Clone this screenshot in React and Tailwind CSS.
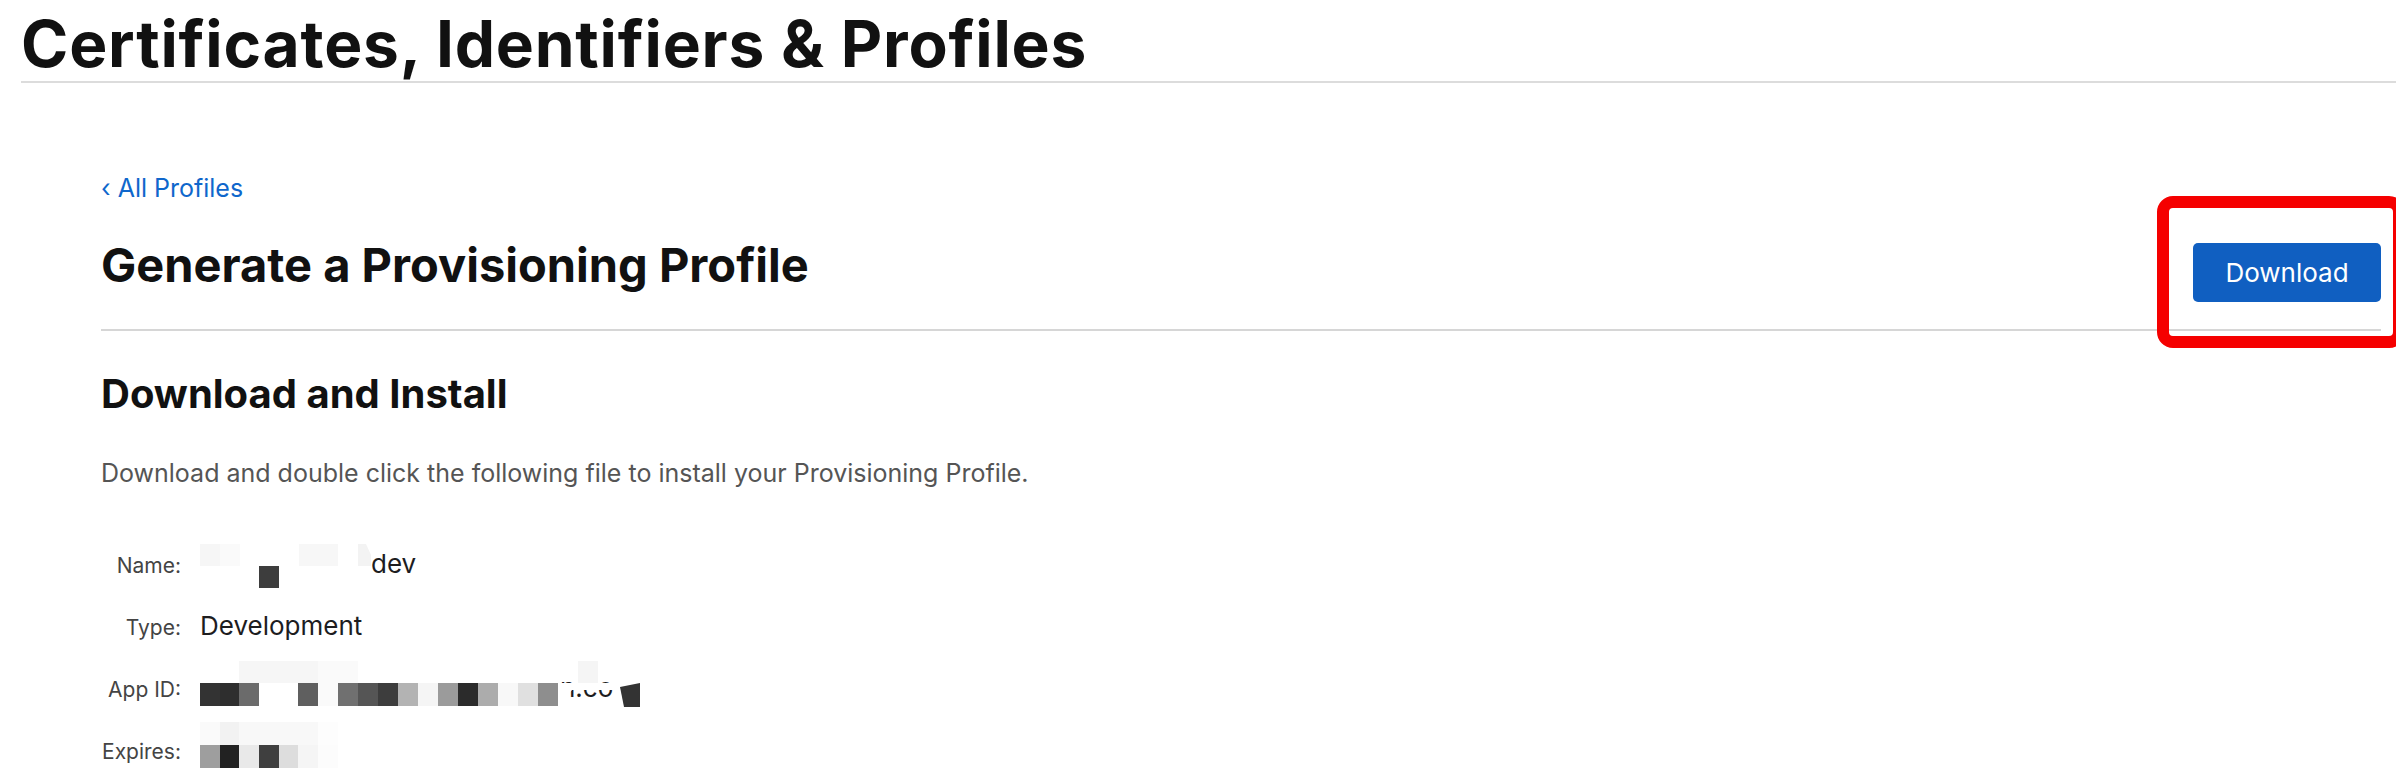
const nameBlocks = [
  [0, 11, 20, 22, "#f6f6f6"],
  [20, 11, 20, 22, "#fafafa"],
  [99, 11, 39, 22, "#f7f7f7"],
  [59, 33, 20, 22, "#3d3d3d"],
];

const appIdBlocks = [
  [39, 4, 79, 22, "#f6f6f6"],
  [118, 4, 40, 22, "#fafafa"],
  [378, 4, 20, 22, "#f5f5f5"],
  [0, 26, 20, 23, "#333333"],
  [20, 26, 19, 23, "#2e2e2e"],
  [39, 26, 20, 23, "#6b6b6b"],
  [98, 26, 20, 23, "#5f5f5f"],
  [118, 26, 20, 23, "#fafafa"],
  [138, 26, 20, 23, "#707070"],
  [158, 26, 20, 23, "#555555"],
  [178, 26, 20, 23, "#3d3d3d"],
  [198, 26, 20, 23, "#b3b3b3"],
  [218, 26, 20, 23, "#f5f5f5"],
  [238, 26, 20, 23, "#9b9b9b"],
  [258, 26, 20, 23, "#2b2b2b"],
  [278, 26, 20, 23, "#acacac"],
  [298, 26, 20, 23, "#f8f8f8"],
  [318, 26, 20, 23, "#e0e0e0"],
  [338, 26, 20, 23, "#8e8e8e"],
];

const expiresBlocks = [
  [0, 3, 20, 23, "#fafafa"],
  [20, 3, 19, 23, "#f2f2f2"],
  [39, 3, 79, 23, "#f8f8f8"],
  [118, 3, 20, 23, "#fdfdfd"],
  [0, 26, 20, 23, "#9e9e9e"],
  [20, 26, 19, 23, "#222222"],
  [39, 26, 20, 23, "#e9e9e9"],
  [59, 26, 20, 23, "#3f3f3f"],
  [79, 26, 19, 23, "#dddddd"],
  [98, 26, 20, 23, "#f5f5f5"],
  [118, 26, 20, 23, "#fcfcfc"],
];

const Mosaic = ({ blocks, width, children }) => (
  <svg
    className="absolute left-0 top-0"
    width={width}
    height="62"
    viewBox={`0 0 ${width} 62`}
  >
    {blocks.map(([x, y, w, h, c], i) => (
      <rect key={i} x={x} y={y} width={w} height={h} fill={c} />
    ))}
    {children}
  </svg>
);

const Row = ({ label, children }) => (
  <div className="flex h-[62px] items-baseline">
    <div className="w-[80px] text-right text-[21px] leading-[62px] text-[#444]">
      {label}
    </div>
    <div className="relative ml-[19px] text-[26px] leading-[62px] text-[#1d1d1f]">
      {children}
    </div>
  </div>
);

export default function App() {
  return (
    <div className="relative h-[782px] w-[2396px] overflow-hidden bg-white font-['Inter',sans-serif]">
      {/* Header */}
      <div className="pl-[21px] pt-[12px]">
        <h1 className="text-[64px] font-bold leading-[64px] tracking-[0.8px] text-[#111]">
          Certificates, Identifiers &amp; Profiles
        </h1>
        <div className="mt-[5px] h-[2px] bg-[#dcdcdc]" />
      </div>

      <div className="pl-[101px] pr-[15px]">
        <a className="mt-[91px] block text-[25px] leading-[29px] text-[#0f67cc]">
          ‹ All Profiles
        </a>

        <div className="mt-[39px] flex items-start justify-between">
          <h2 className="text-[47px] font-bold leading-[46px] text-[#111]">
            Generate a Provisioning Profile
          </h2>
          <button className="mt-[1px] h-[59px] w-[188px] rounded-[5px] bg-[#105fc1] text-[26px] text-white">
            Download
          </button>
        </div>
        <div className="mt-[27px] h-[2px] bg-[#d6d6d6]" />

        <h3 className="mt-[43px] text-[40px] font-bold leading-[40px] text-[#111]">
          Download and Install
        </h3>
        <p className="mt-[45px] text-[25px] leading-[29px] text-[#555]">
          Download and double click the following file to install your Provisioning Profile.
        </p>

        {/* Profile details */}
        <div className="mt-[45px]">
          <Row label="Name:">
            <Mosaic blocks={nameBlocks} width={171}>
              <polygon points="158,11 166,11 171,22 171,33 158,33" fill="#f3f3f3" />
            </Mosaic>
            <span className="pl-[171px]">dev</span>
          </Row>
          <Row label="Type:">Development</Row>
          <Row label="App ID:">
            <span className="pl-[360px]">n.co</span>
            <Mosaic blocks={appIdBlocks} width={440}>
              <polygon points="358,26 440,26 440,33 372,33 358,49" fill="#ffffff" />
              <polygon points="420,30 440,26 440,50 424,50" fill="#333333" />
            </Mosaic>
          </Row>
          <Row label="Expires:">
            <Mosaic blocks={expiresBlocks} width={140} />
            <span className="inline-block w-[140px]">&nbsp;</span>
          </Row>
        </div>
      </div>

      {/* Highlight annotation */}
      <div className="absolute left-[2157px] top-[196px] h-[152px] w-[248px] rounded-[16px] border-[12px] border-[#f50000]" />
    </div>
  );
}
